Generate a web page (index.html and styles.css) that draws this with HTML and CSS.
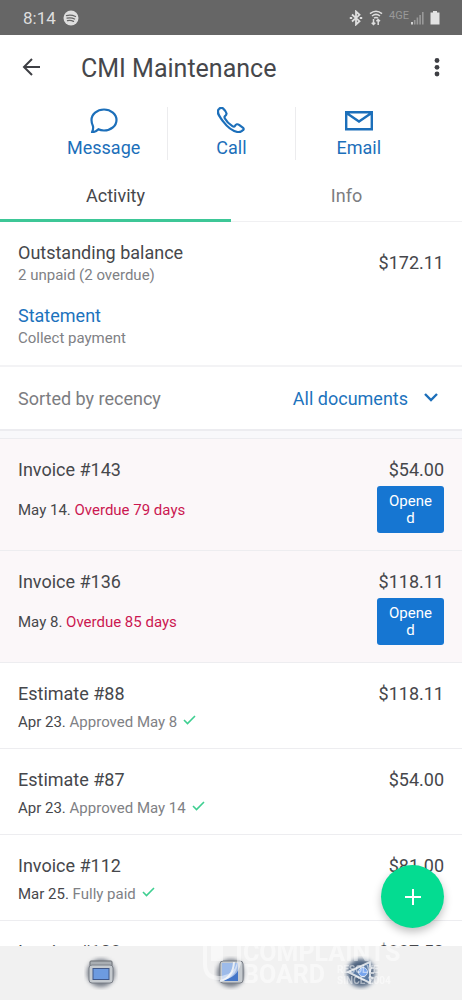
FILE: index.html
```html
<!DOCTYPE html>
<html lang="en">
<head>
<meta charset="utf-8">
<meta name="viewport" content="width=device-width, initial-scale=1">
<title>CMI Maintenance</title>
<link rel="stylesheet" href="styles.css">
</head>
<body>
<div class="screen">
  <div class="status">
    <span class="clock">8:14</span>
    <svg class="spotify" width="16" height="16" viewBox="0 0 16 16"><circle cx="8" cy="8" r="7.5" fill="#dedede"/><path d="M3.5 5.6q4.5-1.3 9 .9M4 8.2q4-1.1 7.6.8M4.5 10.7q3.2-.8 6 .7" fill="none" stroke="#666" stroke-width="1.3" stroke-linecap="round"/></svg>
    <span class="status-icons">
      <svg width="14" height="16" viewBox="0 0 14 16" fill="none" stroke="#dedede" stroke-width="1.8"><path d="M3 4.500l7.500 6.700L7 14.500V1.500l3.500 3.300L3 11.500"/><path d="M.8 8h2.400M10.800 8h2.400"/></svg>
      <svg width="14" height="16" viewBox="0 0 14 16" fill="none" stroke="#dedede" stroke-width="1.500"><path d="M1 3.700q6-5 12 0M3 6q4-3.300 8 0M5 8.200q2-1.500 4 0"/><path d="M4.500 9v5.500M2.700 12.700l1.800 1.800 1.800-1.800M9.200 15v-5.500M7.400 11.300l1.800-1.800 1.800 1.800"/></svg>
      <span class="network">4GE</span>
      <svg width="13" height="14" viewBox="0 0 13 14"><path d="M1 11v2.500" stroke="#eee" stroke-width="1.600"/><path d="M3.700 9v4.500M6.400 6.500v7M9.100 4v9.500M11.800 1v12.500" stroke="#999" stroke-width="1.600"/></svg>
      <svg class="battery" width="10" height="14" viewBox="0 0 10 14"><path d="M3 0h4v1.500h2.500v12h-9v-12H3z" fill="#e2e2e2"/></svg>
    </span>
  </div>

  <header class="topbar">
    <button class="icon-btn" aria-label="Back"><svg width="20" height="20" viewBox="0 0 20 20" fill="none" stroke="#3e3f44" stroke-width="2"><path d="M18 9H2M10 1L2 9l8 8"/></svg></button>
    <h1>CMI Maintenance</h1>
    <button class="icon-btn" aria-label="More options"><svg width="6" height="20" viewBox="0 0 6 20" fill="#3e3f44"><circle cx="3" cy="2.500" r="2.400"/><circle cx="3" cy="9.300" r="2.400"/><circle cx="3" cy="16" r="2.400"/></svg></button>
  </header>

  <div class="actions">
    <button class="action"><svg width="28" height="26" viewBox="0 0 28 26" fill="none" stroke="#1c6fba" stroke-width="2.200" stroke-linejoin="round"><path d="M2 25.200c1-2 1.400-4 1-6C2 17.300 1.500 15.300 1.500 13 1.500 7.200 7 2.500 14 2.500S26.500 7.200 26.500 13 21 23.500 14 23.500c-2 0-4-.4-5.600-1.300-1.700 1.700-3.900 2.900-6.400 3z"/></svg>Message</button>
    <button class="action"><svg width="28" height="26" viewBox="0 0 28 26" fill="none" stroke="#1c6fba" stroke-width="2.200" stroke-linejoin="round"><path d="M2 2Q4-.2 6 1.400q3 2.700 3.500 5.100.2 1.400-1.800 2.800-.5.800.2 2.100c1.600 2.900 4.400 5.700 7.500 7.700 1.200.8 2 .7 2.600-.2 1-1.800 2.600-2.100 4.100-1.100l4 3q1.200 1.100 0 2.300-2.300 2.500-5.600 1.900c-5-1-10.900-5.900-14.400-10.600C2.600 9.900-1.200 5.100 2 2z"/></svg>Call</button>
    <button class="action"><svg width="28" height="26" viewBox="0 0 28 26" fill="none" stroke="#1c6fba" stroke-width="2.400"><path d="M1.200 5.200h25.600v17H1.200zM1.500 6L14 14.500 26.500 6"/></svg>Email</button>
  </div>

  <nav class="tabs">
    <button class="tab active">Activity</button>
    <button class="tab">Info</button>
  </nav>

  <main class="content">
    <section class="summary">
      <div class="line">
        <div>
          <div class="primary">Outstanding balance</div>
          <div class="secondary">2 unpaid (2 overdue)</div>
        </div>
        <div class="primary">$172.11</div>
      </div>
      <div>
        <a class="primary link" href="#statement">Statement</a>
        <div class="secondary">Collect payment</div>
      </div>
    </section>

    <div class="sort">
      <span>Sorted by recency</span>
      <button class="filter">All documents<svg width="14" height="10" viewBox="0 0 14 10" fill="none" stroke="#1c6fba" stroke-width="2.400"><path d="M1 1l6 6 6-6"/></svg></button>
    </div>

    <div class="divider"></div>

    <ul class="docs">
      <li class="doc overdue">
        <div class="doc-main"><div class="primary">Invoice #143</div><div class="detail">May 14. <span class="late">Overdue 79 days</span></div></div>
        <div class="doc-side"><div class="primary">$54.00</div><div class="badge">Opened</div></div>
      </li>
      <li class="doc overdue">
        <div class="doc-main"><div class="primary">Invoice #136</div><div class="detail">May 8. <span class="late">Overdue 85 days</span></div></div>
        <div class="doc-side"><div class="primary">$118.11</div><div class="badge">Opened</div></div>
      </li>
      <li class="doc">
        <div class="doc-main"><div class="primary">Estimate #88</div><div class="detail">Apr 23. <span class="muted">Approved May 8</span><svg class="check" width="13" height="10" viewBox="0 0 13 10"><path d="M1 5l3.500 3.500L12 1"/></svg></div></div>
        <div class="doc-side"><div class="primary">$118.11</div></div>
      </li>
      <li class="doc">
        <div class="doc-main"><div class="primary">Estimate #87</div><div class="detail">Apr 23. <span class="muted">Approved May 14</span><svg class="check" width="13" height="10" viewBox="0 0 13 10"><path d="M1 5l3.500 3.500L12 1"/></svg></div></div>
        <div class="doc-side"><div class="primary">$54.00</div></div>
      </li>
      <li class="doc">
        <div class="doc-main"><div class="primary">Invoice #112</div><div class="detail">Mar 25. <span class="muted">Fully paid</span><svg class="check" width="13" height="10" viewBox="0 0 13 10"><path d="M1 5l3.500 3.500L12 1"/></svg></div></div>
        <div class="doc-side"><div class="primary">$81.00</div></div>
      </li>
      <li class="doc">
        <div class="doc-main"><div class="primary">Invoice #108</div></div>
        <div class="doc-side"><div class="primary">$387.50</div></div>
      </li>
    </ul>
  </main>

  <button class="fab" aria-label="Add document"><svg width="18" height="18" viewBox="0 0 18 18" stroke="#fff" stroke-width="2"><path d="M9 1v16M1 9h16"/></svg></button>

  <footer class="navbar">
    <button class="nav-btn" aria-label="Recent apps"><svg width="34" height="34" viewBox="0 0 34 34"><circle class="glow" cx="17" cy="17" r="14"/><rect x="6" y="5" width="22" height="5" rx="1" fill="#a9aeb3" stroke="#6d7177"/><rect x="5" y="9" width="24" height="18" rx="3" fill="#c5cacf" stroke="#7b8088"/><rect x="9" y="12.500" width="16" height="11" fill="#6d9be0" stroke="#40588a"/></svg></button>
    <button class="nav-btn" aria-label="Home"><svg width="34" height="34" viewBox="0 0 34 34"><circle class="glow" cx="17" cy="17" r="14"/><rect x="6" y="5" width="23" height="22" rx="3" fill="#c5cacf" stroke="#7b8088"/><path d="M8 7h16v18H8z" fill="#9dbbe9"/><path d="M24 7v18H8q14-3 16-18z" fill="#4476c8"/><path d="M20 6q-1 16-14 19" fill="none" stroke="#e9eef4" stroke-width="2"/></svg></button>
    <button class="nav-btn" aria-label="Back"><svg width="34" height="34" viewBox="0 0 34 34"><circle class="glow dark" cx="17" cy="17" r="14"/><path d="M4 16L26 6v21z" fill="#5b7ba5" stroke="#d8dee5" stroke-width="2"/><circle cx="19" cy="16" r="4.500" fill="#77a5ee" stroke="#d2def0"/><path d="M25 12h5M26 17h4M25 22h5" stroke="#c8ced6" stroke-width="2"/></svg></button>
  </footer>

  <div class="watermark">
    <svg width="42" height="46" viewBox="0 0 42 46" fill="none" stroke="#fff" stroke-width="4"><path d="M4 2v22q0 14 14 14h3q14-2 17-15V2"/><path d="M10 3h12v18H10z" fill="#fff" stroke="none"/></svg>
    <div class="wm-text">
      <div class="wm-name">COMPLAINTS</div>
      <div class="wm-row"><span class="wm-name">BOARD</span><span class="wm-tag">RESOLVE<br>SINCE 2004</span></div>
    </div>
  </div>
</div>
</body>
</html>
```
FILE: styles.css
```css
* { box-sizing: border-box; }
body { margin: 0; background: #fff; color: #46474b; font-family: Roboto, "Liberation Sans", sans-serif; }
button { margin: 0; padding: 0; border: 0; background: none; font: inherit; color: inherit; cursor: pointer; }
svg { display: block; flex: none; }

.screen { position: relative; display: flex; flex-direction: column; height: 100vh; overflow: hidden; }

.status { flex: none; display: flex; align-items: center; height: 35px; padding: 0 22px 0 23px; background: #666; color: #dedede; }
.clock { font-size: 17px; }
.spotify { margin-left: 7px; }
.status-icons { display: flex; align-items: center; gap: 6px; margin-left: auto; }
.network { align-self: flex-start; font-size: 11px; line-height: 12px; color: #999; margin-right: -4px; }

.topbar { flex: none; display: flex; align-items: center; height: 66px; padding: 0 22px; }
.topbar h1 { flex: 1; margin: 0 0 0 39px; font-size: 25px; font-weight: 400; }

.actions { flex: none; display: grid; grid-template-columns: repeat(3, 1fr); padding: 6px 40px 0; }
.action { display: flex; flex-direction: column; align-items: center; gap: 4px; height: 53px; font-size: 18px; line-height: 22px; color: #1c6fba; }
.action + .action { border-left: 1px solid #ececee; }

.tabs { flex: none; display: grid; grid-template-columns: 1fr 1fr; margin-top: 10px; }
.tab { height: 52px; font-size: 18px; color: #7c7d81; border-bottom: 1px solid #f0f0f2; }
.tab.active { padding-top: 2px; color: #46474b; border-bottom: 3px solid #3dc797; }

.content { flex: 1; min-height: 0; overflow: hidden; }
.primary { font-size: 18px; line-height: 24px; }
.secondary { font-size: 15px; line-height: 20px; color: #808185; }
.link { display: block; color: #1c73bd; text-decoration: none; }

.summary { display: flex; flex-direction: column; gap: 19px; padding: 19px 18px 17px; border-bottom: 2px solid #f3f3f5; }
.line { display: flex; align-items: center; justify-content: space-between; }

.sort { display: flex; align-items: center; justify-content: space-between; height: 62px; padding: 0 24px 0 18px; font-size: 18px; color: #7c7d81; }
.filter { display: flex; align-items: center; gap: 16px; color: #1c73bd; }
.divider { height: 10px; border-top: 2px solid #ececf0; border-bottom: 1px solid #ececf0; background: #f8f8fb; }

.docs { margin: 0; padding: 0; list-style: none; }
.doc { display: flex; justify-content: space-between; padding: 19px 18px 16px; border-bottom: 1px solid #ededf0; }
.detail { display: flex; align-items: center; margin-top: 6px; font-size: 15px; line-height: 20px; white-space: pre; }
.muted { color: #808185; }
.late { color: #cb1751; }
.check { margin: -4px 0 0 6px; fill: none; stroke: #3ecf91; stroke-width: 1.6; }
.doc-side { display: flex; flex-direction: column; align-items: flex-end; }
.overdue { padding-bottom: 17px; background: #fbf7f9; }
.overdue .detail { margin-top: 18px; }
.badge { width: 67px; margin-top: 4px; padding: 7px 11px 6px; border-radius: 3px; background: #1676d2; color: #fff; font-size: 15px; line-height: 17px; text-align: center; word-break: break-all; }

.fab { position: absolute; right: 18px; bottom: 72px; display: grid; place-items: center; width: 63px; height: 63px; border-radius: 50%; background: #04dc91; box-shadow: 0 4px 8px rgba(0, 0, 0, .25); }

.navbar { flex: none; display: grid; grid-template-columns: repeat(3, 1fr); height: 54px; padding: 0 36px; background: #f1f1f1; }
.nav-btn { display: grid; place-items: center; }
.glow { fill: #777d88; filter: blur(2px); }
.glow.dark { fill: #4f6480; }

.watermark { position: absolute; left: 201px; bottom: 14px; display: flex; align-items: flex-end; color: #fff; opacity: .5; pointer-events: none; }
.wm-name { font-size: 25px; line-height: 22px; font-weight: 700; }
.wm-row { display: flex; align-items: center; gap: 12px; }
.wm-tag { font-size: 10px; line-height: 11px; font-weight: 700; }
```
